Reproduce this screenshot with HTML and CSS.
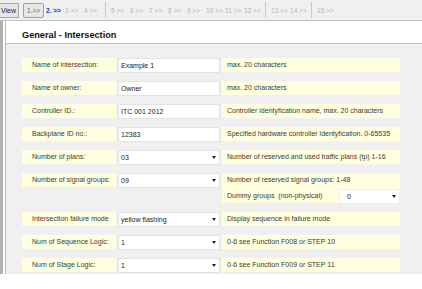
FILE: index.html
```html
<!DOCTYPE html>
<html>
<head>
    <meta charset="UTF-8">
    <title>General - Intersection</title>
    <link rel="stylesheet" href="styles.css">
</head>
<body>
<div class="toolbar">
    <span class="view-btn">View</span>
    <span class="step current">1.&gt;&gt;</span>
    <span class="step active">2. &gt;&gt;</span>
    <span class="step">3 &gt;&gt;</span>
    <span class="step">4 &gt;&gt;</span>
    <span class="sep"></span>
    <span class="step">5 &gt;&gt;</span>
    <span class="step">6 &gt;&gt;</span>
    <span class="step">7 &gt;&gt;</span>
    <span class="step">8 &gt;&gt;</span>
    <span class="step">9 &gt;&gt;</span>
    <span class="step">10 &gt;&gt;</span>
    <span class="step">11 &gt;&gt;</span>
    <span class="step">12 &gt;&gt;</span>
    <span class="sep"></span>
    <span class="step">13 &gt;&gt;</span>
    <span class="step">14 &gt;&gt;</span>
    <span class="sep"></span>
    <span class="step">15 &gt;&gt;</span>
</div>

<div class="frame">
    <div class="panel">
        <div class="title">General - Intersection</div>
        <div class="form">
            <div class="row">
                <div class="label">Name of intersection:</div>
                <div class="field">Example 1</div>
                <div class="desc">max. 20 characters</div>
            </div>
            <div class="row">
                <div class="label">Name of owner:</div>
                <div class="field">Owner</div>
                <div class="desc">max. 20 characters</div>
            </div>
            <div class="row">
                <div class="label">Controller ID.:</div>
                <div class="field">ITC 001 2012</div>
                <div class="desc">Controller identyfication name, max. 20 characters</div>
            </div>
            <div class="row">
                <div class="label">Backplane ID no.:</div>
                <div class="field">12383</div>
                <div class="desc">Specified hardware controller identyfication. 0-65535</div>
            </div>
            <div class="row">
                <div class="label">Number of plans:</div>
                <div class="field select">03</div>
                <div class="desc">Number of reserved and used traffic plans (tp) 1-16</div>
            </div>
            <div class="row tall">
                <div class="label">Number of signal groups:</div>
                <div class="field select">09</div>
                <div class="desc">
                    <div class="desc-line">Number of reserved signal groups: 1-48</div>
                    <div class="desc-line">
                        <span>Dummy groups&nbsp; (non-physical)</span>
                        <span class="field select small">0</span>
                    </div>
                </div>
            </div>
            <div class="row">
                <div class="label">Intersection failure mode</div>
                <div class="field select">yellow flashing</div>
                <div class="desc">Display sequence in failure mode</div>
            </div>
            <div class="row">
                <div class="label">Num of Sequence Logic:</div>
                <div class="field select">1</div>
                <div class="desc">0-6 see Function F008 or STEP 10</div>
            </div>
            <div class="row">
                <div class="label">Num of Stage Logic:</div>
                <div class="field select">1</div>
                <div class="desc">0-6 see Function F009 or STEP 11</div>
            </div>
        </div>
    </div>
</div>
</body>
</html>
```

FILE: styles.css
```css
body {
    margin: 0;
    font-family: "Liberation Sans", Arial, sans-serif;
    font-size: 7px;
    color: #333;
    background: white;
}
.toolbar {
    display: flex;
    align-items: center;
    height: 20px;
    background-color: #f0f0f0;
    border-bottom: 1px solid #c4c4c4;
}
.view-btn {
    display: inline-block;
    height: 13px;
    line-height: 13px;
    padding: 0 2px 0 1px;
    background: #e6e6e6;
    border: 1px solid #a8a8a8;
    border-left: none;
    color: #222;
    margin-right: 4px;
}
.step {
    width: 19px;
    font-size: 6.5px;
    color: #b4b4b4;
    white-space: nowrap;
}
.step.current {
    width: auto;
    height: 13px;
    line-height: 13px;
    padding: 0 3px;
    border: 1px solid #a0a0a0;
    border-radius: 2px;
    background: #e6e6e6;
    color: #666;
    margin-right: 2px;
}
.step.active {
    color: #2233cc;
    font-weight: bold;
}
.sep {
    width: 1px;
    height: 16px;
    background: #c8c8c8;
    margin: 0 5px 0 2px;
}
.frame {
    border-left: 3px solid #b0b0b0;
    height: 253px;
}
.panel {
    margin-left: 2px;
    border-left: 1px solid #b8b8b8;
    height: 100%;
    display: flex;
    flex-direction: column;
}
.title {
    background: white;
    font-size: 9.2px;
    font-weight: bold;
    color: #111;
    padding: 9px 0 2px 16px;
    line-height: 11px;
    border-bottom: 1px solid #c4c4c4;
}
.form {
    flex: 1;
    background-color: #f0f0f0;
    padding: 14px 0 0 16px;
    display: flex;
    flex-direction: column;
    gap: 9px;
}
.row {
    display: flex;
    height: 14px;
}
.row.tall {
    height: 30px;
}
.label {
    width: 84px;
    padding-left: 10px;
    margin-right: 2px;
    background-color: #ffffe0;
    color: #3a3a3a;
    line-height: 14px;
    height: 14px;
}
.field {
    position: relative;
    width: 98px;
    height: 13px;
    line-height: 13px;
    padding-left: 2px;
    background: white;
    border: 1px solid #e2e2e2;
    color: #222;
    margin-right: 2px;
}
.select::after {
    content: "";
    position: absolute;
    right: 3px;
    top: 5px;
    border-left: 2px solid transparent;
    border-right: 2px solid transparent;
    border-top: 3px solid #222;
}
.desc {
    width: 173px;
    padding-left: 5px;
    background-color: #ffffe0;
    color: #3a3a3a;
    line-height: 14px;
}
.row.tall .desc {
    height: 30px;
}
.desc-line {
    display: flex;
    justify-content: space-between;
    height: 14px;
    line-height: 14px;
    margin-bottom: 2px;
}
.field.small {
    width: 52px;
    padding-left: 7px;
    margin-right: 0;
    border-color: #f0f0e0;
}
```
